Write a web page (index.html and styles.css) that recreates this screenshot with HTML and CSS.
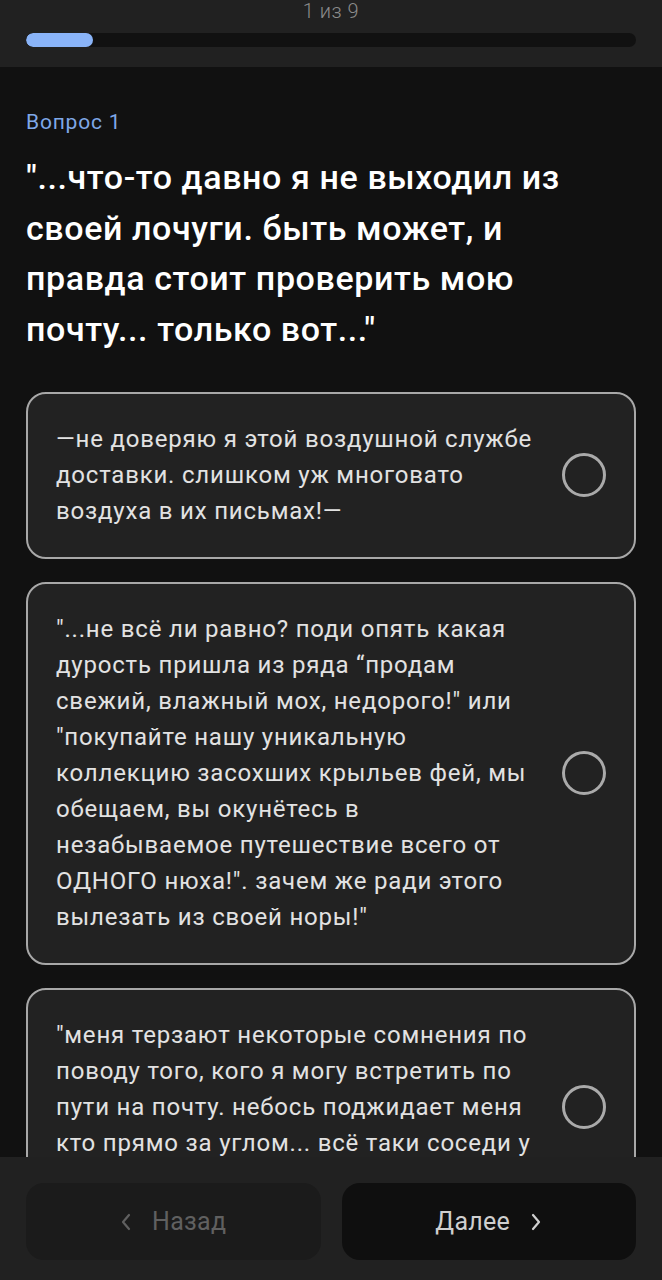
FILE: index.html
```html
<!DOCTYPE html>
<html lang="ru">
<head>
<meta charset="utf-8">
<link rel="stylesheet" href="styles.css">
</head>
<body>
<div class="app">
  <header class="top">
    <div class="counter">1 из 9</div>
    <div class="track"><div class="fill" style="width:11%"></div></div>
  </header>
  <main class="content">
    <div class="label">Вопрос 1</div>
    <h1 class="question">"...что-то давно я не выходил из своей лочуги. быть может, и правда стоит проверить мою почту... только вот..."</h1>
    <div class="options">
      <div class="option">
        <p class="opt-text">—не доверяю я этой воздушной службе доставки. слишком уж многовато воздуха в их письмах!—</p>
        <span class="radio"></span>
      </div>
      <div class="option">
        <p class="opt-text">"...не всё ли равно? поди опять какая дурость пришла из ряда “продам свежий, влажный мох, недорого!" или "покупайте нашу уникальную коллекцию засохших крыльев фей, мы обещаем, вы окунётесь в незабываемое путешествие всего от ОДНОГО нюха!". зачем же ради этого вылезать из своей норы!"</p>
        <span class="radio"></span>
      </div>
      <div class="option">
        <p class="opt-text">"меня терзают некоторые сомнения по поводу того, кого я могу встретить по пути на почту. небось поджидает меня кто прямо за углом... всё таки соседи у меня не самые приятные..."</p>
        <span class="radio"></span>
      </div>
    </div>
  </main>
  <footer class="bottom">
    <button class="btn btn-back">
      <svg class="chev" viewBox="0 0 12 20" width="12" height="20"><path d="M9 3 L3 10 L9 17" fill="none" stroke="currentColor" stroke-width="2.2" stroke-linecap="round" stroke-linejoin="round"/></svg>
      <span>Назад</span>
    </button>
    <button class="btn btn-next">
      <span>Далее</span>
      <svg class="chev" viewBox="0 0 12 20" width="12" height="20"><path d="M3 3 L9 10 L3 17" fill="none" stroke="currentColor" stroke-width="2.2" stroke-linecap="round" stroke-linejoin="round"/></svg>
    </button>
  </footer>
</div>
</body>
</html>
```
FILE: styles.css
```css
* { box-sizing: border-box; }
html, body {
  margin: 0;
  padding: 0;
  background: #111111;
  font-family: Roboto, "Noto Sans", sans-serif;
}
.app {
  width: 662px;
  height: 1280px;
  display: flex;
  flex-direction: column;
  overflow: hidden;
  background: #111111;
}
.top {
  background: #212121;
  height: 67px;
  flex: none;
  padding: 0 26px;
}
.counter {
  text-align: center;
  color: #8c8c8c;
  font-size: 20px;
  line-height: 22px;
  font-weight: 300;
  letter-spacing: 0.5px;
}
.track {
  margin-top: 11px;
  height: 14px;
  border-radius: 7px;
  background: #111111;
  overflow: hidden;
}
.fill {
  height: 100%;
  border-radius: 7px;
  background: #8ab4f8;
}
.content {
  flex: 1;
  overflow: hidden;
  padding: 43px 26px 0;
}
.label {
  color: #7fa8e8;
  font-size: 21px;
  line-height: 24px;
  letter-spacing: 0.8px;
}
.question {
  margin: 18px 0 0;
  color: #ffffff;
  font-size: 34px;
  line-height: 50.5px;
  font-weight: 500;
  letter-spacing: 0.6px;
  padding-right: 30px;
}
.options {
  margin-top: 38px;
  display: flex;
  flex-direction: column;
  gap: 23px;
}
.option {
  background: #222222;
  border: 2.5px solid #a8a8a8;
  border-radius: 20px;
  padding: 27px 28px 28px 28px;
  display: flex;
  align-items: center;
  gap: 20px;
}
.opt-text {
  margin: 0;
  flex: 1;
  color: #e2e2e2;
  font-size: 24px;
  line-height: 36px;
  font-weight: 400;
  letter-spacing: 0.8px;
}
.radio {
  flex: none;
  width: 44px;
  height: 44px;
  border-radius: 50%;
  border: 3px solid #aaaaaa;
}
.bottom {
  flex: none;
  background: #212121;
  height: 123px;
  padding: 26px 26px 20px;
  display: flex;
  gap: 21px;
}
.btn {
  flex: 1;
  border: none;
  border-radius: 18px;
  font-family: inherit;
  font-size: 25px;
  font-weight: 400;
  letter-spacing: 0.3px;
  display: flex;
  align-items: center;
  justify-content: center;
  gap: 20px;
  height: 77px;
}
.btn-back {
  background: #1b1b1b;
  color: #606060;
}
.btn-next {
  background: #0f0f0f;
  color: #cfcfcf;
}
.chev { display: block; }
```
